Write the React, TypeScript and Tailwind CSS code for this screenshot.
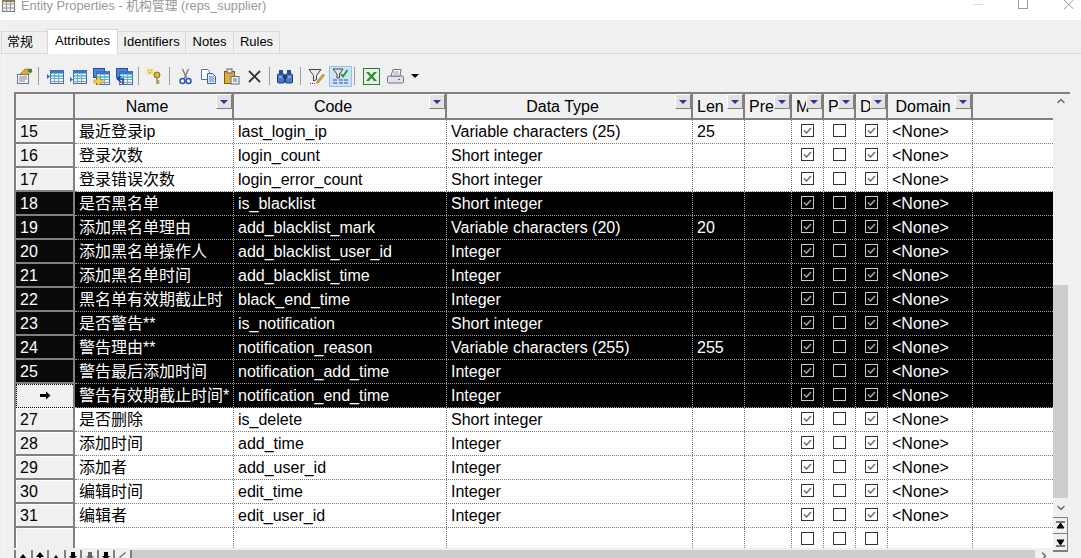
import { ChevronDown, ChevronRight, ChevronUp } from "lucide-react";

const CJK = "font-['Liberation_Sans','Noto_Sans_CJK_SC',sans-serif]";

const rows = [
  { n: "15", name: "最近登录ip", code: "last_login_ip", type: "Variable characters (25)", len: "25" },
  { n: "16", name: "登录次数", code: "login_count", type: "Short integer" },
  { n: "17", name: "登录错误次数", code: "login_error_count", type: "Short integer" },
  { n: "18", name: "是否黑名单", code: "is_blacklist", type: "Short integer", sel: true },
  { n: "19", name: "添加黑名单理由", code: "add_blacklist_mark", type: "Variable characters (20)", len: "20", sel: true },
  { n: "20", name: "添加黑名单操作人", code: "add_blacklist_user_id", type: "Integer", sel: true },
  { n: "21", name: "添加黑名单时间", code: "add_blacklist_time", type: "Integer", sel: true },
  { n: "22", name: "黑名单有效期截止时", code: "black_end_time", type: "Integer", sel: true },
  { n: "23", name: "是否警告**", code: "is_notification", type: "Short integer", sel: true },
  { n: "24", name: "警告理由**", code: "notification_reason", type: "Variable characters (255)", len: "255", sel: true },
  { n: "25", name: "警告最后添加时间", code: "notification_add_time", type: "Integer", sel: true },
  { n: "→", name: "警告有效期截止时间*", code: "notification_end_time", type: "Integer", sel: true, cur: true },
  { n: "27", name: "是否删除", code: "is_delete", type: "Short integer" },
  { n: "28", name: "添加时间", code: "add_time", type: "Integer" },
  { n: "29", name: "添加者", code: "add_user_id", type: "Integer" },
  { n: "30", name: "编辑时间", code: "edit_time", type: "Integer" },
  { n: "31", name: "编辑者", code: "edit_user_id", type: "Integer" },
];

const headers = [
  { label: "Name", w: "w-[159px]", center: true },
  { label: "Code", w: "w-[213px]", center: true },
  { label: "Data Type", w: "w-[246px]", center: true },
  { label: "Len", w: "w-[52px]" },
  { label: "Pre", w: "w-[47px]" },
  { label: "M", w: "w-[32px]" },
  { label: "P", w: "w-[32px]" },
  { label: "D", w: "w-[32px]" },
  { label: "Domain", w: "w-[85px]", center: true },
];

function HeaderCell({ label, w, center }: { label: string; w: string; center?: boolean }) {
  return (
    <div className={`${w} relative h-full shrink-0 overflow-hidden border-r-2 border-[#808080] bg-[#f0f0f0] pt-[1px] text-[16px] leading-[24px] text-black ${center ? "pr-[13px] text-center" : "pl-[4px]"}`}>
      {label}
      <div className="absolute top-0 right-0 flex h-[15px] w-[16px] flex-col items-center justify-center border-t border-l border-r border-b border-t-white border-l-white border-r-[#808080] border-b-[#808080] bg-[#e2e2e2]">
        <div className="h-0 w-0 border-x-[4px] border-t-[4px] border-x-transparent border-t-[#34349a]" />
      </div>
    </div>
  );
}

function Check({ on, sel }: { on?: boolean; sel?: boolean }) {
  return (
    <svg width="13" height="13" viewBox="0 0 13 13" className="block">
      <rect x="0.5" y="0.5" width="12" height="12" fill="none" stroke={sel ? "#c8c8c8" : "#333"} />
      {on && <path d="M3 6.5 L5.5 9 L10 4" fill="none" stroke={sel ? "#aaa" : "#666"} strokeWidth="1.4" />}
    </svg>
  );
}

function Cell({ w, children, sel }: { w: string; children?: React.ReactNode; sel?: boolean }) {
  return (
    <div className={`${w} h-full shrink-0 overflow-hidden border-r border-dotted whitespace-nowrap ${sel ? "border-[#999]" : "border-[#777]"} pl-[4px]`}>
      {children}
    </div>
  );
}

function Box({ on, sel }: { on?: boolean; sel?: boolean }) {
  return (
    <div className={`flex h-full w-[32px] shrink-0 items-start justify-center border-r border-dotted pt-[4px] ${sel ? "border-[#999]" : "border-[#777]"}`}>
      <Check on={on} sel={sel} />
    </div>
  );
}

function Row({ r }: { r: (typeof rows)[number] }) {
  const sel = !!r.sel;
  return (
    <div className={`flex h-[24px] border-b border-dotted leading-[24px] ${sel ? "border-[#999] bg-black text-white" : "border-[#777] bg-white text-black"}`}>
      <Cell w="w-[159px]" sel={sel}>{r.name}</Cell>
      <Cell w="w-[213px]" sel={sel}>{r.code}</Cell>
      <Cell w="w-[246px]" sel={sel}>{r.type}</Cell>
      <Cell w="w-[52px]" sel={sel}>{r.len}</Cell>
      <Cell w="w-[47px]" sel={sel} />
      <Box on sel={sel} />
      <Box sel={sel} />
      <Box on sel={sel} />
      <Cell w="w-[85px]" sel={sel}>{"<None>"}</Cell>
    </div>
  );
}

function RowHead({ r }: { r: (typeof rows)[number] }) {
  if (r.cur) {
    return (
      <div className="flex h-[24px] items-center justify-center border-y border-l border-dotted border-black bg-[#f0f0f0] pb-[1px]">
        <svg width="11" height="9" viewBox="0 0 11 9"><path d="M0 3h6V0.5L10.5 4.5 6 8.5V6H0z" fill="#000" /></svg>
      </div>
    );
  }
  return (
    <div className={`h-[24px] border-b-2 border-[#808080] pl-[4px] text-[16px] leading-[23px] ${r.sel ? "bg-[#0a0a0a] text-white" : "bg-[#f0f0f0] text-black shadow-[inset_1px_1px_0_#fff]"}`}>
      {r.n}
    </div>
  );
}

function Sep({ ml }: { ml: string }) {
  return <div className={`${ml} h-[18px] w-px shrink-0 bg-[#9a9a9a]`} />;
}

function Ico({ ml, children }: { ml: string; children?: React.ReactNode }) {
  return (
    <svg width="17" height="17" viewBox="0 0 17 17" className={`${ml} block shrink-0`}>{children}</svg>
  );
}

function TableIcon({ x = 3, y = 2 }: { x?: number; y?: number }) {
  const w = 16 - x;
  return (
    <>
      <rect x={x + 0.5} y={y + 0.5} width={w} height="13" fill="#eef3fa" stroke="#4a6b9e" />
      <rect x={x + 0.5} y={y + 0.5} width={w} height="3" fill="#3a76d0" />
      <rect x={x + 1} y={y + 5} width={w - 1} height="2" fill="#35e2ea" />
      <path d={`M${x} ${y + 8.5}h${w}M${x} ${y + 11.5}h${w}M${x + 4.5} ${y + 4}v9M${x + 8.5} ${y + 4}v9`} stroke="#8aa0c0" />
    </>
  );
}

function Toolbar() {
  return (
    <div className="flex h-[24px] items-center pl-[6px]">
      <Ico ml="ml-0">
        <rect x="1.5" y="6.5" width="11" height="9" fill="#f4f4f4" stroke="#6a7a90" />
        <path d="M3 9h8M3 11h8M3 13h6" stroke="#7a8aa0" />
        <path d="M4 6 9 1h6l1 3-6 3z" fill="#d8a93a" stroke="#6a5a20" strokeWidth="0.5" />
        <path d="M12 1h4v3h-4z" fill="#3c8a3c" />
      </Ico>
      <Sep ml="ml-[5px]" />
      <Ico ml="ml-[8px]"><TableIcon /><path d="M0 6 3 8.500 0 11z" fill="#1f6fd8" /></Ico>
      <Ico ml="ml-[6px]"><TableIcon /><path d="M0 9 3 11.500 0 14z" fill="#1f6fd8" /></Ico>
      <Ico ml="ml-[6px]">
        <rect x="0.500" y="0.500" width="11" height="9" fill="#4a86dc" stroke="#2a4f90" />
        <TableIcon x={3} y={3} />
        <path d="M1 12h3V9h3v3h3v3H7v2H4v-2H1z" fill="#f2d24a" stroke="#a08020" strokeWidth="0.5" />
      </Ico>
      <Ico ml="ml-[6px]">
        <rect x="0.500" y="0.500" width="11" height="9" fill="#4a86dc" stroke="#2a4f90" />
        <TableIcon x={3} y={3} />
        <path d="M5 8 1.500 11 5 14M2 11h5v5" fill="none" stroke="#1f3f9f" strokeWidth="1.600" />
      </Ico>
      <Sep ml="ml-[5px]" />
      <Ico ml="ml-[7px]">
        <rect x="0.500" y="0.500" width="7" height="6" fill="#f3df8c" />
        <path d="M2 2h1v1H2zM5 2h1v1H5zM3 4h2v1H3z" fill="#c9a43a" />
        <circle cx="11" cy="7" r="3" fill="#e2b43c" stroke="#8a6a1c" />
        <path d="M11 10V16M11 13h2.500M11 15h2.500" stroke="#8a6a1c" />
      </Ico>
      <Sep ml="ml-[6px]" />
      <Ico ml="ml-[7px]">
        <path d="M5.500 1 9.500 10M11.500 1 7.500 10" stroke="#7a7a7a" strokeWidth="1.400" />
        <circle cx="5.500" cy="13" r="2.500" fill="none" stroke="#2a55b0" strokeWidth="1.500" />
        <circle cx="11.500" cy="13" r="2.500" fill="none" stroke="#2a55b0" strokeWidth="1.500" />
      </Ico>
      <Ico ml="ml-[6px]">
        <path d="M1.500 1.500h6l2 2v8h-8z" fill="#fff" stroke="#4a76b0" />
        <path d="M7.500 5.500h5l3 3v7h-8z" fill="#dce8f8" stroke="#3a66a0" />
        <path d="M9 9h5M9 11h5M9 13h5" stroke="#5a86c0" />
      </Ico>
      <Ico ml="ml-[6px]">
        <rect x="1.500" y="3.500" width="10" height="12" fill="#dcae3c" stroke="#7a5a18" />
        <rect x="4" y="1" width="5" height="4" fill="#e8e8e8" stroke="#666" />
        <rect x="8" y="8.500" width="8" height="7.500" fill="#f4f4f4" stroke="#5a6a80" />
        <path d="M10 11h4M10 13h4" stroke="#5a6a80" />
      </Ico>
      <Ico ml="ml-[6px]"><path d="M3 3 14 14M14 3 3 14" stroke="#333" strokeWidth="1.800" /></Ico>
      <Sep ml="ml-[6px]" />
      <Ico ml="ml-[7px]">
        <rect x="2" y="2" width="4" height="4" fill="#2a4f90" />
        <rect x="10" y="2" width="4" height="4" fill="#2a4f90" />
        <rect x="0.500" y="6" width="7" height="9" rx="1" fill="#4a7ac0" stroke="#1f3f80" />
        <rect x="8.500" y="6" width="7" height="9" rx="1" fill="#4a7ac0" stroke="#1f3f80" />
        <rect x="6" y="7" width="4" height="3" fill="#1f3f80" />
        <path d="M2 9h3M11 9h3" stroke="#cfe0f8" />
      </Ico>
      <Sep ml="ml-[6px]" />
      <Ico ml="ml-[7px]">
        <path d="M1 1.500h12L8.500 7.500v4l-3 1.500V7.500z" fill="#e8e8e8" stroke="#444" />
        <path d="M9 13.500 15 6l1.500 1.500-6 7-2 .5z" fill="#e8a83c" stroke="#8a5a18" strokeWidth="0.6" />
        <path d="M2 15.500h5" stroke="#444" strokeDasharray="1 1" />
      </Ico>
      <div className="ml-[4px] flex h-[21px] w-[23px] shrink-0 items-center justify-center border border-[#8fc3ea] bg-[#cde4f7]">
        <Ico ml="ml-0">
          <path d="M1 1h10L7.500 6v4H5V6z" fill="#e4e4e4" stroke="#444" />
          <path d="M9 6l2 2.500L15.500 2" fill="none" stroke="#1c9a2c" strokeWidth="1.800" />
          <path d="M1 12h4M7 12h4M12 12h4M1 15h4M7 15h4M12 15h4" stroke="#2a4fb0" strokeWidth="1.200" />
        </Ico>
      </div>
      <Sep ml="ml-[2px]" />
      <Ico ml="ml-[8px]">
        <rect x="0.500" y="0.500" width="16" height="16" fill="#e4f0e0" stroke="#2e7a34" />
        <path d="M3 4h3l2.500 3L11 4h3L10 8.500l4 4.500h-3L8.500 10 6 13H3l4-4.500z" fill="#2e8a3a" />
      </Ico>
      <Ico ml="ml-[7px]">
        <rect x="0.500" y="8" width="16" height="7" rx="1.500" fill="#dfe3ea" stroke="#6a7484" />
        <path d="M4 8 6 1.500h8L13 8z" fill="#fff" stroke="#6a7484" />
        <path d="M6 4h6M6 6h6" stroke="#9aa4b4" />
        <rect x="11" y="11" width="2" height="1" fill="#c04040" />
      </Ico>
      <div className="ml-[7px] h-0 w-0 border-x-[4px] border-t-[4px] border-x-transparent border-t-black" />
    </div>
  );
}

function NavBtn({ d, fill = "#000" }: { d: string; fill?: string }) {
  return (
    <div className="flex h-[8px] w-[17px] items-start justify-center overflow-hidden border-r-2 border-[#808080] bg-[#f0f0f0] pt-[2px]">
      <svg width="10" height="9" viewBox="0 0 10 9" className="shrink-0"><path d={d} fill={fill} /></svg>
    </div>
  );
}

export default function App() {
  return (
    <div className={`flex h-[558px] w-[1081px] flex-col overflow-hidden bg-white ${CJK}`}>
      {/* title bar */}
      <div className="flex h-[20px] shrink-0 items-start bg-white">
        <svg width="14" height="12" viewBox="0 0 14 12" className="ml-[2px]">
          <rect x="0.500" y="0.500" width="12" height="11" fill="#f0f0f0" stroke="#777" />
          <path d="M0 4h13M0 8h13M4.500 0v12M8.500 0v12" stroke="#999" />
          <rect x="0" y="0" width="13" height="2" fill="#8a7a60" />
        </svg>
        <div className="ml-[5px] text-[12.800px] leading-[12px] text-[#999]">Entity Properties - 机构管理 (reps_supplier)</div>
        <div className="mt-[4px] ml-auto h-px w-[10px] bg-[#ddd]" />
        <div className="ml-[35px] h-[9px] w-[10px] border-x border-b border-[#999]" />
        <svg width="10" height="9" viewBox="0 0 10 9" className="mr-[7px] ml-[36px]">
          <path d="M0 0 9.500 9M9.500 0 0 9" stroke="#999" fill="none" />
        </svg>
      </div>

      <div className="flex min-h-0 flex-1 flex-col bg-[#f0f0f0]">
        {/* tabs */}
        <div className="mt-[9px] flex h-[25px] shrink-0 items-end border-b border-[#d9d9d9] pl-[1px] text-[13px] text-black">
          <div className="flex h-[22px] w-[46px] items-center border border-r-0 border-b-0 border-[#d9d9d9] pb-[2px] pl-[5px]">常规</div>
          <div className="relative top-px flex h-[25px] w-[71px] items-start justify-center border border-b-0 border-[#d9d9d9] bg-white pt-[1px]">Attributes</div>
          <div className="flex h-[22px] w-[68px] items-center justify-center border-r border-t border-[#d9d9d9] pb-[2px]">Identifiers</div>
          <div className="flex h-[22px] w-[48px] items-center justify-center border-r border-t border-[#d9d9d9] pb-[2px]">Notes</div>
          <div className="flex h-[22px] w-[46px] items-center justify-center border-r border-t border-[#d9d9d9] pb-[2px]">Rules</div>
        </div>

        <div className="flex min-h-0 flex-1 flex-col pl-[3px]">
          <div className="flex min-h-0 flex-1 flex-col border-l border-[#f8f8f8] pl-[6px]">
            <div className="shrink-0 pt-[10px] pb-[4px]"><Toolbar /></div>

            <div className="flex min-h-0 flex-1">
              {/* grid */}
              <div className="ml-[4px] flex w-[1039px] shrink-0 flex-col overflow-hidden border-t-2 border-l-2 border-[#808080] text-[16px]">
                <div className="flex h-[26px] shrink-0 border-b-2 border-[#808080]">
                  <div className="h-full w-[59px] shrink-0 border-r-2 border-[#808080] bg-[#f0f0f0]" />
                  {headers.map((h) => <HeaderCell key={h.label} {...h} />)}
                  <div className="flex-1 bg-[#f0f0f0]" />
                </div>
                <div className="flex min-h-0 flex-1">
                  <div className="flex w-[59px] shrink-0 flex-col border-r-2 border-[#808080]">
                    {rows.map((r) => <RowHead key={r.n} r={r} />)}
                    <div className="flex-1 bg-[#f0f0f0] shadow-[inset_1px_1px_0_#fff]" />
                  </div>
                  <div className="min-w-0 flex-1 bg-white">
                    {rows.map((r) => <Row key={r.n} r={r} />)}
                    <div className="flex h-[24px] leading-[24px]">
                      <Cell w="w-[159px]" /><Cell w="w-[213px]" /><Cell w="w-[246px]" /><Cell w="w-[52px]" /><Cell w="w-[47px]" />
                      <Box /><Box /><Box />
                      <Cell w="w-[85px]" />
                    </div>
                  </div>
                </div>
              </div>

              {/* vertical scrollbar */}
              <div className="flex w-[17px] shrink-0 flex-col items-start border-t-2 border-[#808080]">
                <div className="flex h-[14px] w-[15px] shrink-0 items-center justify-center"><ChevronUp size={12} strokeWidth={2.500} className="text-[#606060]" /></div>
                <div className="h-[177px] shrink-0" />
                <div className="h-[213px] w-[15px] shrink-0 bg-[#cdcdcd]" />
                <div className="flex h-[19px] w-[15px] shrink-0 items-center justify-center"><ChevronDown size={12} strokeWidth={2.500} className="text-[#606060]" /></div>
                <div className="flex h-[17px] w-[15px] shrink-0 items-center justify-center border-r border-b border-t border-[#808080]"><svg width="9" height="9" viewBox="0 0 9 9"><path d="M0 1h9M4.500 2 8 7H1z" stroke="#000" fill="#000" /></svg></div>
                <div className="flex h-[18px] w-[15px] shrink-0 items-center justify-center border-r border-b-2 border-[#808080]"><svg width="9" height="9" viewBox="0 0 9 9"><path d="M0 8h9M4.500 7 8 2H1z" stroke="#000" fill="#000" /></svg></div>
              </div>
            </div>

            {/* bottom nav + horizontal scrollbar */}
            <div className="mt-[2px] ml-[4px] flex h-[8px] shrink-0 items-stretch">
              <div className="flex w-[118px] shrink-0 border-l-2 border-[#808080]">
                <NavBtn d="M1 1h8M5 2 9 7H1z" />
                <NavBtn d="M5 0 9 5H6v3H4V5H1z" />
                <NavBtn d="M5 3 8 7H2z" />
                <NavBtn d="M3 0h4v4h2L5 8 1 4h2z" />
                <NavBtn d="M3 0h4v4h2L5 8 1 4h2z" fill="#666" />
                <NavBtn d="M3 0h4v4h2L5 8 1 4h2z" />
                <NavBtn d="M2 6 8 1 7 0 1 5z" fill="#777" />
              </div>
              <div className="w-[903px] shrink-0 bg-[#cdcdcd]" />
              <div className="flex w-[18px] shrink-0 items-start justify-center overflow-hidden"><ChevronRight size={12} strokeWidth={2.500} className="shrink-0 text-[#606060]" /></div>
            </div>
          </div>
        </div>
      </div>
    </div>
  );
}
